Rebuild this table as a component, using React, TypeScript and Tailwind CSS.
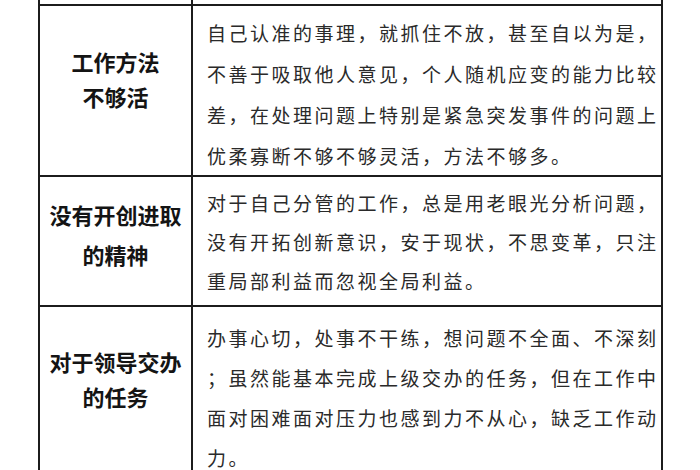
const rows = [
  {
    title: ["工作方法", "不够活"],
    titleClass: "pt-[38px] leading-[35px]",
    lines: [
      "自己认准的事理，就抓住不放，甚至自以为是，",
      "不善于吸取他人意见，个人随机应变的能力比较",
      "差，在处理问题上特别是紧急突发事件的问题上",
      "优柔寡断不够不够灵活，方法不够多。",
    ],
    textClass: "pt-[6px] leading-[41px]",
    rowClass: "h-[171px]",
  },
  {
    title: ["没有开创进取", "的精神"],
    titleClass: "pt-[17px] leading-[40px]",
    lines: [
      "对于自己分管的工作，总是用老眼光分析问题，",
      "没有开拓创新意识，安于现状，不思变革，只注",
      "重局部利益而忽视全局利益。",
    ],
    textClass: "pt-[6px] leading-[39px]",
    rowClass: "h-[130px]",
  },
  {
    title: ["对于领导交办", "的任务"],
    titleClass: "pt-[37px] leading-[35px]",
    lines: [
      "办事心切，处事不干练，想问题不全面、不深刻",
      "；虽然能基本完成上级交办的任务，但在工作中",
      "面对困难面对压力也感到力不从心，缺乏工作动",
      "力。",
    ],
    textClass: "pt-[11px] leading-[40px]",
    rowClass: "h-[200px]",
  },
];

export default function App() {
  return (
    <div className="w-[700px] h-[470px] overflow-hidden bg-white font-['Noto_Sans_CJK_SC',sans-serif]">
      <div className="ml-[38px] w-[625px] border-x-2 border-[#1c1c1c]">
        <div className="grid grid-cols-[153px_1fr] h-[4px]">
          <div className="border-r-2 border-[#1c1c1c]" />
          <div />
        </div>
        {rows.map((row, i) => (
          <div
            key={i}
            className={`grid grid-cols-[153px_1fr] border-t-2 border-[#1c1c1c] ${row.rowClass}`}
          >
            <div
              className={`border-r-2 border-[#1c1c1c] text-center text-[22px] font-bold text-[#141414] ${row.titleClass}`}
            >
              {row.title.map((t) => (
                <div key={t}>{t}</div>
              ))}
            </div>
            <div
              className={`pl-[14px] text-[19px] tracking-[2.5px] text-[#2a2a2a] whitespace-nowrap ${row.textClass}`}
            >
              {row.lines.map((l) => (
                <div key={l}>{l}</div>
              ))}
            </div>
          </div>
        ))}
      </div>
    </div>
  );
}
